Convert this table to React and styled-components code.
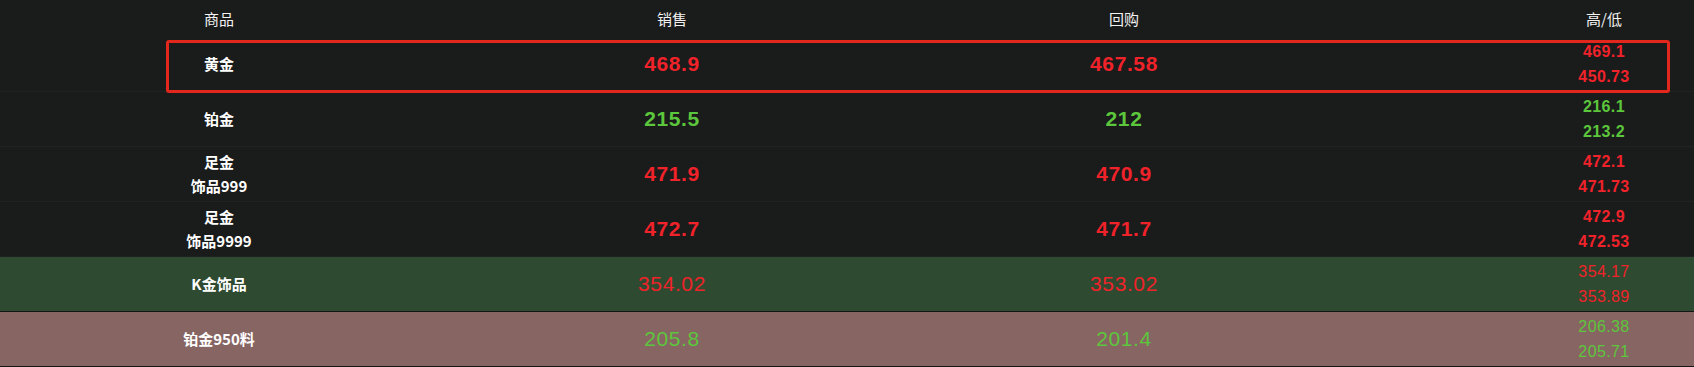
import React from 'react';
import styled, { createGlobalStyle } from 'styled-components';

const GlobalStyle = createGlobalStyle`
    html, body {
        margin: 0;
        padding: 0;
        background: #1a1b1b;
    }
    body {
        font-family: "Liberation Sans", Arial, "Noto Sans CJK SC", sans-serif;
        color: #fff;
    }
`;

const BOARD_COLUMNS = '438px 468px 436px 1fr';

const Board = styled.div`
    position: relative;
    width: 1694px;
    background: #1a1b1b;
`;

const HeaderRow = styled.div`
    display: grid;
    grid-template-columns: ${BOARD_COLUMNS};
    height: 37px;
    align-items: center;
    font-family: "Noto Sans CJK SC", sans-serif;
    font-size: 15px;
    color: #f2f2f2;
`;

const Row = styled.div`
    display: grid;
    grid-template-columns: ${BOARD_COLUMNS};
    height: 54px;
    align-items: center;
    background: ${p => p.$bg || '#1a1b1b'};
    border-bottom: 1px solid ${p => p.$line || '#202222'};
`;

const Cell = styled.div`
    text-align: center;
    padding-left: ${p => (p.$shift ? '172px' : '0')};
`;

const Label = styled(Cell)`
    font-family: "Noto Sans CJK SC", sans-serif;
    font-weight: 700;
    font-size: 15px;
    line-height: 24px;
    color: #fff;
`;

const Price = styled(Cell)`
    font-size: 21px;
    letter-spacing: 0.6px;
    font-weight: ${p => (p.$thin ? 400 : 700)};
    color: ${p => (p.$up ? '#f0222a' : '#5cc63c')};
`;

const HighLow = styled(Cell)`
    display: flex;
    flex-direction: column;
    font-size: 16px;
    letter-spacing: 0.4px;
    font-weight: ${p => (p.$thin ? 400 : 700)};
    line-height: 25.5px;
    color: ${p => (p.$up ? '#f0222a' : '#5cc63c')};
`;

const Highlight = styled.div`
    position: absolute;
    left: 166px;
    top: 40px;
    width: 1504px;
    height: 53px;
    box-sizing: border-box;
    border: 3px solid #e3271d;
    border-radius: 3px;
    pointer-events: none;
`;

const rows = [
    { name: ['黄金'], sell: '468.9', buy: '467.58', high: '469.1', low: '450.73', up: true },
    { name: ['铂金'], sell: '215.5', buy: '212', high: '216.1', low: '213.2', up: false },
    { name: ['足金', '饰品999'], sell: '471.9', buy: '470.9', high: '472.1', low: '471.73', up: true },
    { name: ['足金', '饰品9999'], sell: '472.7', buy: '471.7', high: '472.9', low: '472.53', up: true },
    { name: ['K金饰品'], sell: '354.02', buy: '353.02', high: '354.17', low: '353.89', up: true, bg: '#2e4a30', line: '#141515', thin: true },
    { name: ['铂金950料'], sell: '205.8', buy: '201.4', high: '206.38', low: '205.71', up: false, bg: '#876563', line: '#141515', thin: true },
];

const App = () => (
    <>
        <GlobalStyle />
        <Board>
            <HeaderRow>
                <Cell>商品</Cell>
                <Cell>销售</Cell>
                <Cell>回购</Cell>
                <Cell $shift>高/低</Cell>
            </HeaderRow>
            {rows.map(r => (
                <Row key={r.name.join('')} $bg={r.bg} $line={r.line}>
                    <Label>
                        {r.name.map(line => <div key={line}>{line}</div>)}
                    </Label>
                    <Price $up={r.up} $thin={r.thin}>{r.sell}</Price>
                    <Price $up={r.up} $thin={r.thin}>{r.buy}</Price>
                    <HighLow $shift $up={r.up} $thin={r.thin}>
                        <span>{r.high}</span>
                        <span>{r.low}</span>
                    </HighLow>
                </Row>
            ))}
            <Highlight />
        </Board>
    </>
);

export default App;
